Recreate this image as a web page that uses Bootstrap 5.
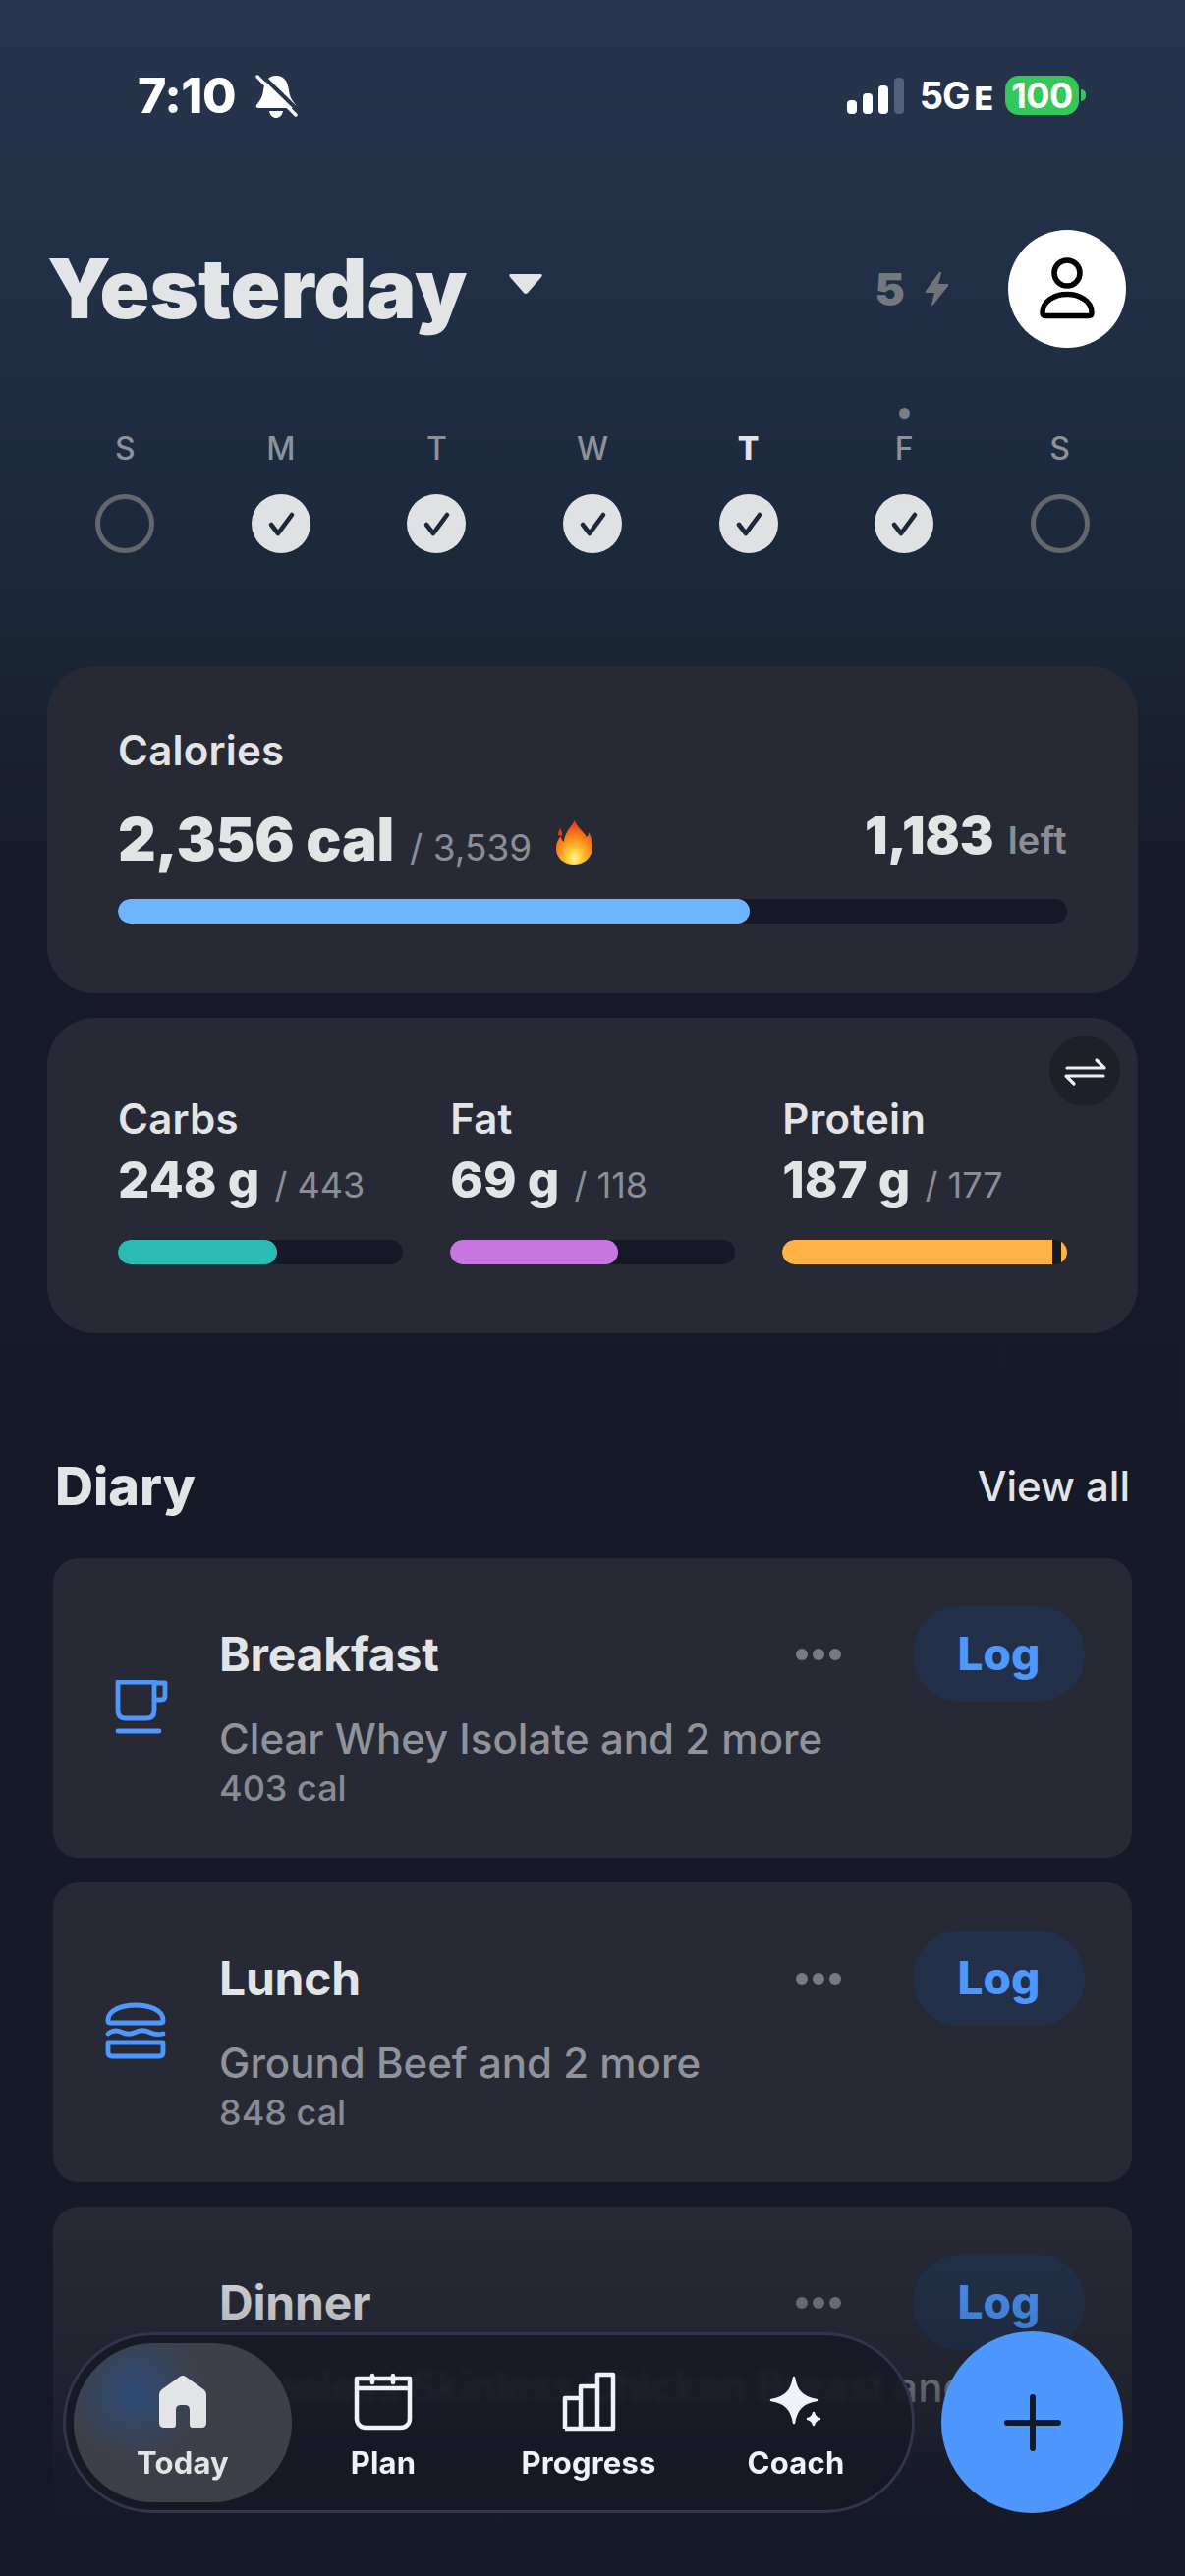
<!doctype html>
<html lang="en">
<head>
<meta charset="utf-8">
<title>Today</title>
<link href="https://cdn.jsdelivr.net/npm/bootstrap@5.3.0/dist/css/bootstrap.min.css" rel="stylesheet">
<style>
html,body{margin:0;height:2622px;}
body{width:1206px;overflow:hidden;position:relative;font-family:Inter,"Liberation Sans",sans-serif;color:#e3e4e6;
 background:linear-gradient(180deg,#26354d 0,#212f46 300px,#1b2839 600px,#181f2e 780px,#161a28 1000px,#151925 2622px);}
.status-row{height:56px;margin-top:69px;padding:0 101px 0 140px;}
.clock{font-size:50px;font-weight:800;line-height:56px;color:#fff;letter-spacing:-.5px;}
.bell-ic{margin-left:17px;}
.net5g{font-size:38px;font-weight:700;color:#fff;line-height:56px;letter-spacing:-1px;margin-left:16px;}
.net-e{font-size:32px;font-weight:800;color:#fff;margin-left:5px;line-height:56px;padding-top:7px;}
.batt{width:75px;height:40px;border-radius:14px;background:#34c759;color:#fff;font-size:36px;font-weight:700;line-height:40px;text-align:center;margin-left:12px;letter-spacing:-.5px;}
.batt-nub{width:5px;height:12px;background:#34c759;border-radius:0 6px 6px 0;margin-left:2px;}
.sig-wrap{height:37px;gap:6px;}
.sig{width:10px;border-radius:4px;background:#fff;}
.head-row{margin-top:109px;padding:0 60px 0 48px;height:120px;}
.day-title{font-size:84px;font-weight:900;line-height:120px;margin:0;color:#e3e4e6;letter-spacing:0;}
.caret-ic{margin-left:42px;margin-top:-10px;}
.streak{font-size:46px;font-weight:900;color:#75787d;}
.bolt-ic{margin-left:19px;}
.avatar{width:120px;height:120px;border-radius:50%;background:#fff;margin-left:60px;}
.week{margin:61px 48px 0;grid-template-columns:repeat(7,1fr);}
.top-dot{height:11px;width:11px;border-radius:50%;background:#7a7f85;}
.top-dot-none{height:11px;}
.day-l{font-size:32px;font-weight:500;color:#8d9298;line-height:40px;margin-top:11px;}
.day-l.is-cur{font-weight:800;color:#e3e4e6;}
.tick{width:60px;height:60px;border-radius:50%;margin-top:26px;background:#e0e1e3;}
.tick-off{background:transparent;border:5px solid #63676c;}
.panel{background:#272a35;border:0;border-radius:48px;margin:0 48px;color:#e3e4e6;position:relative;}
.panel-cal{margin-top:115px;height:333px;padding:61px 72px 0;}
.panel-mac{margin-top:25px;height:321px;padding:78px 72px 0;}
.lab{font-size:42px;font-weight:600;line-height:50px;letter-spacing:.2px;}
.big-row{margin-top:30px;height:70px;}
.big-num{font-size:60px;font-weight:900;line-height:70px;letter-spacing:-.2px;}
.sub-num{font-size:37px;font-weight:400;color:#8b8e95;margin-left:16px;}
.fire{margin-left:25px;margin-top:16px;}
.left-num{font-size:52px;font-weight:900;line-height:63px;letter-spacing:0;}
.left-txt{font-size:38px;font-weight:600;color:#8b8e95;margin-left:14px;letter-spacing:.3px;}
.progress.track{height:25px;background:#161925;border-radius:13px;}
.track-cal{margin-top:26px;}
.track-mac{margin-top:26px;}
.fill-cal{background:#6eb5ff;border-radius:13px;}
.fill-carb{background:#2abcb2;border-radius:13px;}
.fill-fat{background:#c678e0;border-radius:13px;}
.fill-pro{background:#ffb347;border-radius:13px 0 0 13px;}
.fill-pro2{background:#ffb347;}
.mac-gap{width:9px;}
.mac-col{width:289.7px;}
.mac-val{font-size:51px;font-weight:800;line-height:60px;margin-top:7px;}
.mac-sub{font-size:36px;font-weight:400;color:#8b8e95;margin-left:15px;}
.swap{position:absolute;top:18px;right:18px;width:72px;height:72px;border-radius:50%;background:#1e2029;}
.diary-head{margin:126px 56px 0;height:60px;}
.diary-t{font-size:54px;font-weight:800;line-height:60px;margin:0;color:#e3e4e6;}
.view-all{font-size:42px;font-weight:500;color:#e3e4e6;text-decoration:none;line-height:60px;margin-top:-1px;}
.meal-list{margin:43px 54px 0;gap:25px;}
.meal{background:#272a35;border:0;border-radius:26px;height:305px;color:#e3e4e6;overflow:hidden;}
.meal-tall{height:354px;}
.meal-ic{margin-left:50px;margin-right:47px;width:72px;height:72px;flex:none;}
.meal-ic-burger{margin-top:116px;}
.meal-ic-cup{margin-top:124px;}
.meal-main{padding:49px 48px 0 0;}
.meal-tt{height:97px;}
.meal-name{font-size:48px;font-weight:700;line-height:60px;margin:0;letter-spacing:-.2px;}
.more-dots{gap:5px;margin-right:73px;}
.more-dots i{display:block;width:12px;height:12px;border-radius:50%;background:#777a80;}
.btn.log-btn{width:175px;height:97px;border-radius:48px;background:#223149;border:0;color:#4e97ff;font-size:46px;font-weight:800;padding:0;line-height:97px;}
.meal-desc{font-size:42px;font-weight:500;color:#90939a;line-height:50px;margin-top:13px;white-space:nowrap;}
.meal-cal{font-size:36px;font-weight:500;color:#888b92;line-height:44px;margin-top:3px;}
.fade-low{position:absolute;left:0;right:0;top:2270px;height:352px;pointer-events:none;z-index:5;
 background:linear-gradient(180deg,rgba(21,25,37,0) 0,rgba(21,25,37,.2) 90px,rgba(21,25,37,.38) 160px,rgba(21,25,37,.93) 260px,rgba(21,25,37,1) 352px);}
.tabbar{position:absolute;z-index:6;left:64px;top:2374px;width:867px;height:184px;border-radius:92px;border:3px solid #32364a;
 background:rgba(22,25,36,.86);backdrop-filter:blur(3px);padding:8px 0 0 8px;}
.tab{height:162px;padding-top:26px;text-decoration:none;color:#f1f2f8;font-size:31px;font-weight:700;line-height:38px;letter-spacing:.2px;}
.tab span{margin-top:9px;}
.tab-today{width:222px;border-radius:81px;color:#e3e4e6;position:relative;overflow:hidden;
 background:radial-gradient(circle 70px at 62px 50px,#2d4b77 0,rgba(45,75,119,0) 100%),#3e4049;}
.tab-plan{width:186px;}
.tab-prog{width:232px;}
.tab-coach{width:190px;}
.fab{position:absolute;z-index:6;left:958px;top:2373px;width:185px;height:185px;border-radius:50%;background:#4d97ff;border:0;padding:0;}
</style>
</head>
<body>

<div class="status-row d-flex justify-content-between align-items-center">
  <div class="d-flex align-items-center">
    <span class="clock">7:10</span>
    <svg class="bell-ic" width="48" height="50" viewBox="0 0 48 50"><path fill="#fff" d="M24 5C33 5 36 12 37 20C38 28 41 31 44 35C45 37 44 38 42 38H6C4 38 3 37 4 35C7 31 10 28 11 20C12 12 15 5 24 5ZM17 41H31C30 46 27 48 24 48C21 48 18 46 17 41Z"/><path stroke="#25344c" stroke-width="4" d="M8 3L47 41"/><path stroke="#fff" stroke-width="3.5" stroke-linecap="round" d="M5 6L44 45"/></svg>
  </div>
  <div class="d-flex align-items-center">
    <div class="sig-wrap d-flex align-items-end">
      <div class="sig" style="height:14px"></div><div class="sig" style="height:21px"></div><div class="sig" style="height:29px"></div><div class="sig" style="height:37px;background:#52617a"></div>
    </div>
    <span class="net5g">5G</span><span class="net-e">E</span>
    <div class="batt">100</div><div class="batt-nub"></div>
  </div>
</div>

<header class="head-row d-flex align-items-center justify-content-between">
  <div class="d-flex align-items-center">
    <h1 class="day-title">Yesterday</h1>
    <svg class="caret-ic" width="36" height="22" viewBox="0 0 36 22"><path fill="#e3e4e6" d="M3 1H33Q36 1 34 4L20 20Q18 22 16 20L2 4Q0 1 3 1Z"/></svg>
  </div>
  <div class="d-flex align-items-center">
    <span class="streak">5</span>
    <svg class="bolt-ic" width="26" height="36" viewBox="0 0 26 36"><path fill="#707377" d="M16 1L2 20Q1 22 3 22H11L8 34Q8 36 10 34L25 15Q26 13 24 13H15L18 2Q18 0 16 1Z"/></svg>
    <div class="avatar">
      <svg width="120" height="120" viewBox="0 0 120 120" fill="none" stroke="#000" stroke-width="5.5"><circle cx="60" cy="44" r="13"/><path d="M38 87.5H82Q85 87.5 85 84C85 72 72 65.5 60 65.5C48 65.5 35 72 35 84Q35 87.5 38 87.5Z"/></svg>
    </div>
  </div>
</header>

<div class="week d-grid text-center">
  <div class="d-flex flex-column align-items-center w-100"><div class="top-dot-none"></div><div class="day-l">S</div><div class="tick tick-off"></div></div>
  <div class="d-flex flex-column align-items-center w-100"><div class="top-dot-none"></div><div class="day-l">M</div><div class="tick"><svg width="60" height="60" viewBox="0 0 60 60" fill="none" stroke="#1d2838" stroke-width="4.6" stroke-linecap="round" stroke-linejoin="round"><path d="M20 31L27 40L41 21"/></svg></div></div>
  <div class="d-flex flex-column align-items-center w-100"><div class="top-dot-none"></div><div class="day-l">T</div><div class="tick"><svg width="60" height="60" viewBox="0 0 60 60" fill="none" stroke="#1d2838" stroke-width="4.6" stroke-linecap="round" stroke-linejoin="round"><path d="M20 31L27 40L41 21"/></svg></div></div>
  <div class="d-flex flex-column align-items-center w-100"><div class="top-dot-none"></div><div class="day-l">W</div><div class="tick"><svg width="60" height="60" viewBox="0 0 60 60" fill="none" stroke="#1d2838" stroke-width="4.6" stroke-linecap="round" stroke-linejoin="round"><path d="M20 31L27 40L41 21"/></svg></div></div>
  <div class="d-flex flex-column align-items-center w-100"><div class="top-dot-none"></div><div class="day-l is-cur">T</div><div class="tick"><svg width="60" height="60" viewBox="0 0 60 60" fill="none" stroke="#1d2838" stroke-width="4.6" stroke-linecap="round" stroke-linejoin="round"><path d="M20 31L27 40L41 21"/></svg></div></div>
  <div class="d-flex flex-column align-items-center w-100"><div class="top-dot"></div><div class="day-l">F</div><div class="tick"><svg width="60" height="60" viewBox="0 0 60 60" fill="none" stroke="#1d2838" stroke-width="4.6" stroke-linecap="round" stroke-linejoin="round"><path d="M20 31L27 40L41 21"/></svg></div></div>
  <div class="d-flex flex-column align-items-center w-100"><div class="top-dot-none"></div><div class="day-l">S</div><div class="tick tick-off"></div></div>
</div>

<section class="card panel panel-cal">
  <div class="lab">Calories</div>
  <div class="big-row d-flex justify-content-between align-items-start">
    <div class="d-flex align-items-baseline">
      <span class="big-num">2,356 cal</span><span class="sub-num">/ 3,539</span>
      <svg class="fire align-self-start" width="37" height="45" viewBox="0 0 37 45">
        <defs><radialGradient id="fl" cx=".5" cy=".85" r=".8"><stop offset="0" stop-color="#fff6a8"/><stop offset=".22" stop-color="#ffd23c"/><stop offset=".5" stop-color="#ff9a1f"/><stop offset="1" stop-color="#e8371a"/></radialGradient></defs>
        <path fill="url(#fl)" d="M19 0C21 7 27 10 31 17C33 15 33 14 33 12C36 17 37 22 37 27C37 38 28 45 18 45C8 45 0 38 0 29C0 23 2 19 5 16C5 19 6 21 8 22C8 14 14 8 19 0Z"/>
        <path fill="#e8371a" d="M4 8C5 11 7 12 6 16L2 15C2 12 3 10 4 8Z"/>
      </svg>
    </div>
    <div class="d-flex align-items-baseline"><span class="left-num">1,183</span><span class="left-txt">left</span></div>
  </div>
  <div class="progress track track-cal"><div class="progress-bar fill-cal" style="width:66.6%"></div></div>
</section>

<section class="card panel panel-mac">
  <div class="swap d-flex align-items-center justify-content-center">
    <svg width="72" height="72" viewBox="0 0 72 72" fill="none" stroke="#eeeff1" stroke-width="3.2" stroke-linecap="round" stroke-linejoin="round"><path d="M18 33H56L48 25"/><path d="M55 41H17L25 49"/></svg>
  </div>
  <div class="d-flex justify-content-between">
    <div class="mac-col">
      <div class="lab">Carbs</div>
      <div class="mac-val d-flex align-items-baseline">248 g<span class="mac-sub">/ 443</span></div>
      <div class="progress track track-mac"><div class="progress-bar fill-carb" style="width:56%"></div></div>
    </div>
    <div class="mac-col">
      <div class="lab">Fat</div>
      <div class="mac-val d-flex align-items-baseline">69 g<span class="mac-sub">/ 118</span></div>
      <div class="progress track track-mac"><div class="progress-bar fill-fat" style="width:59%"></div></div>
    </div>
    <div class="mac-col">
      <div class="lab">Protein</div>
      <div class="mac-val d-flex align-items-baseline">187 g<span class="mac-sub">/ 177</span></div>
      <div class="progress track track-mac"><div class="progress-bar fill-pro" style="width:94.7%"></div><div class="mac-gap"></div><div class="progress-bar fill-pro2 flex-grow-1"></div></div>
    </div>
  </div>
</section>

<div class="diary-head d-flex justify-content-between align-items-center">
  <h2 class="diary-t">Diary</h2>
  <a class="view-all" href="#">View all</a>
</div>

<div class="meal-list d-flex flex-column">
  <article class="card meal flex-row align-items-start">
    <svg class="meal-ic meal-ic-cup" viewBox="0 0 72 72" fill="none" stroke="#4e97ff" stroke-width="4.8" stroke-linecap="round" stroke-linejoin="round"><path d="M16 2H53V31Q53 39 45 39H24Q16 39 16 31Z"/><path d="M53 3H64V16Q64 20 60 20H53"/><path d="M16 52H58"/></svg>
    <div class="meal-main flex-grow-1">
      <div class="meal-tt d-flex align-items-center justify-content-between">
        <h3 class="meal-name flex-grow-1">Breakfast</h3>
        <div class="more-dots d-flex"><i></i><i></i><i></i></div>
        <button class="btn log-btn" type="button">Log</button>
      </div>
      <div class="meal-desc">Clear Whey Isolate and 2 more</div>
      <div class="meal-cal">403 cal</div>
    </div>
  </article>
  <article class="card meal flex-row align-items-start">
    <svg class="meal-ic meal-ic-burger" viewBox="0 0 72 72" fill="none" stroke="#4e97ff" stroke-width="4.8" stroke-linecap="round" stroke-linejoin="round"><path d="M6 24C6 14 20 9 34 9C48 9 62 14 62 24V25Q62 27 60 27H8Q6 27 6 25Z"/><path d="M6 38C11 34 15 34 20 36.500C25 39 29 39 34 36.500C39 34 43 34 48 36.500C53 39 58 39 62 38"/><path d="M6 47H62V57Q62 61 58 61H10Q6 61 6 57Z"/></svg>
    <div class="meal-main flex-grow-1">
      <div class="meal-tt d-flex align-items-center justify-content-between">
        <h3 class="meal-name flex-grow-1">Lunch</h3>
        <div class="more-dots d-flex"><i></i><i></i><i></i></div>
        <button class="btn log-btn" type="button">Log</button>
      </div>
      <div class="meal-desc">Ground Beef and 2 more</div>
      <div class="meal-cal">848 cal</div>
    </div>
  </article>
  <article class="card meal meal-tall flex-row align-items-start">
    <div class="meal-ic"></div>
    <div class="meal-main flex-grow-1">
      <div class="meal-tt d-flex align-items-center justify-content-between">
        <h3 class="meal-name flex-grow-1">Dinner</h3>
        <div class="more-dots d-flex"><i></i><i></i><i></i></div>
        <button class="btn log-btn" type="button">Log</button>
      </div>
      <div class="meal-desc">Boneless Skinless Chicken Breast and</div>
    </div>
  </article>
</div>

<div class="fade-low"></div>

<nav class="tabbar d-flex align-items-start">
  <a class="tab tab-today d-flex flex-column align-items-center" href="#">
    <svg width="68" height="68" viewBox="0 0 68 68"><path fill="#e3e4e6" d="M31 8Q34 6 37 8L55 21Q58 23 58 27V55Q58 60 53 60H44Q41 60 41 57V42Q41 37 36 37H32Q27 37 27 42V57Q27 60 24 60H15Q10 60 10 55V27Q10 23 13 21Z"/></svg>
    <span>Today</span>
  </a>
  <a class="tab tab-plan d-flex flex-column align-items-center" href="#">
    <svg width="68" height="68" viewBox="0 0 68 68" fill="none" stroke="#f1f2f8" stroke-width="4.5" stroke-linecap="round" stroke-linejoin="round"><path d="M7 10H61V51A9 9 0 0 1 52 60H16A9 9 0 0 1 7 51Z"/><path d="M7 20H61"/><path d="M23 7V14M44 7V14"/></svg>
    <span>Plan</span>
  </a>
  <a class="tab tab-prog d-flex flex-column align-items-center" href="#">
    <svg width="68" height="68" viewBox="0 0 68 68" fill="none" stroke="#f1f2f8" stroke-width="4.5" stroke-linejoin="round"><path d="M10 61V30H26"/><path d="M26 61V18H43V61"/><path d="M43 18V6H59V61H10"/></svg>
    <span>Progress</span>
  </a>
  <a class="tab tab-coach d-flex flex-column align-items-center" href="#">
    <svg width="68" height="68" viewBox="0 0 68 68" fill="#f1f2f8" stroke="#f1f2f8" stroke-width="2.5" stroke-linejoin="round"><path d="M32 9C34 23 41 30 55 32C41 34 34 41 32 55C30 41 23 34 9 32C23 30 30 23 32 9Z"/><path d="M52 45Q53 50 58 51Q53 52 52 57Q51 52 46 51Q51 50 52 45Z"/></svg>
    <span>Coach</span>
  </a>
</nav>

<button class="fab d-flex align-items-center justify-content-center" type="button" aria-label="Add">
  <svg width="60" height="60" viewBox="0 0 60 60" fill="none" stroke="#151a28" stroke-width="6" stroke-linecap="round"><path d="M30 4V56M4 30H56"/></svg>
</button>

<script src="https://cdn.jsdelivr.net/npm/bootstrap@5.3.0/dist/js/bootstrap.bundle.min.js"></script>
</body>
</html>
